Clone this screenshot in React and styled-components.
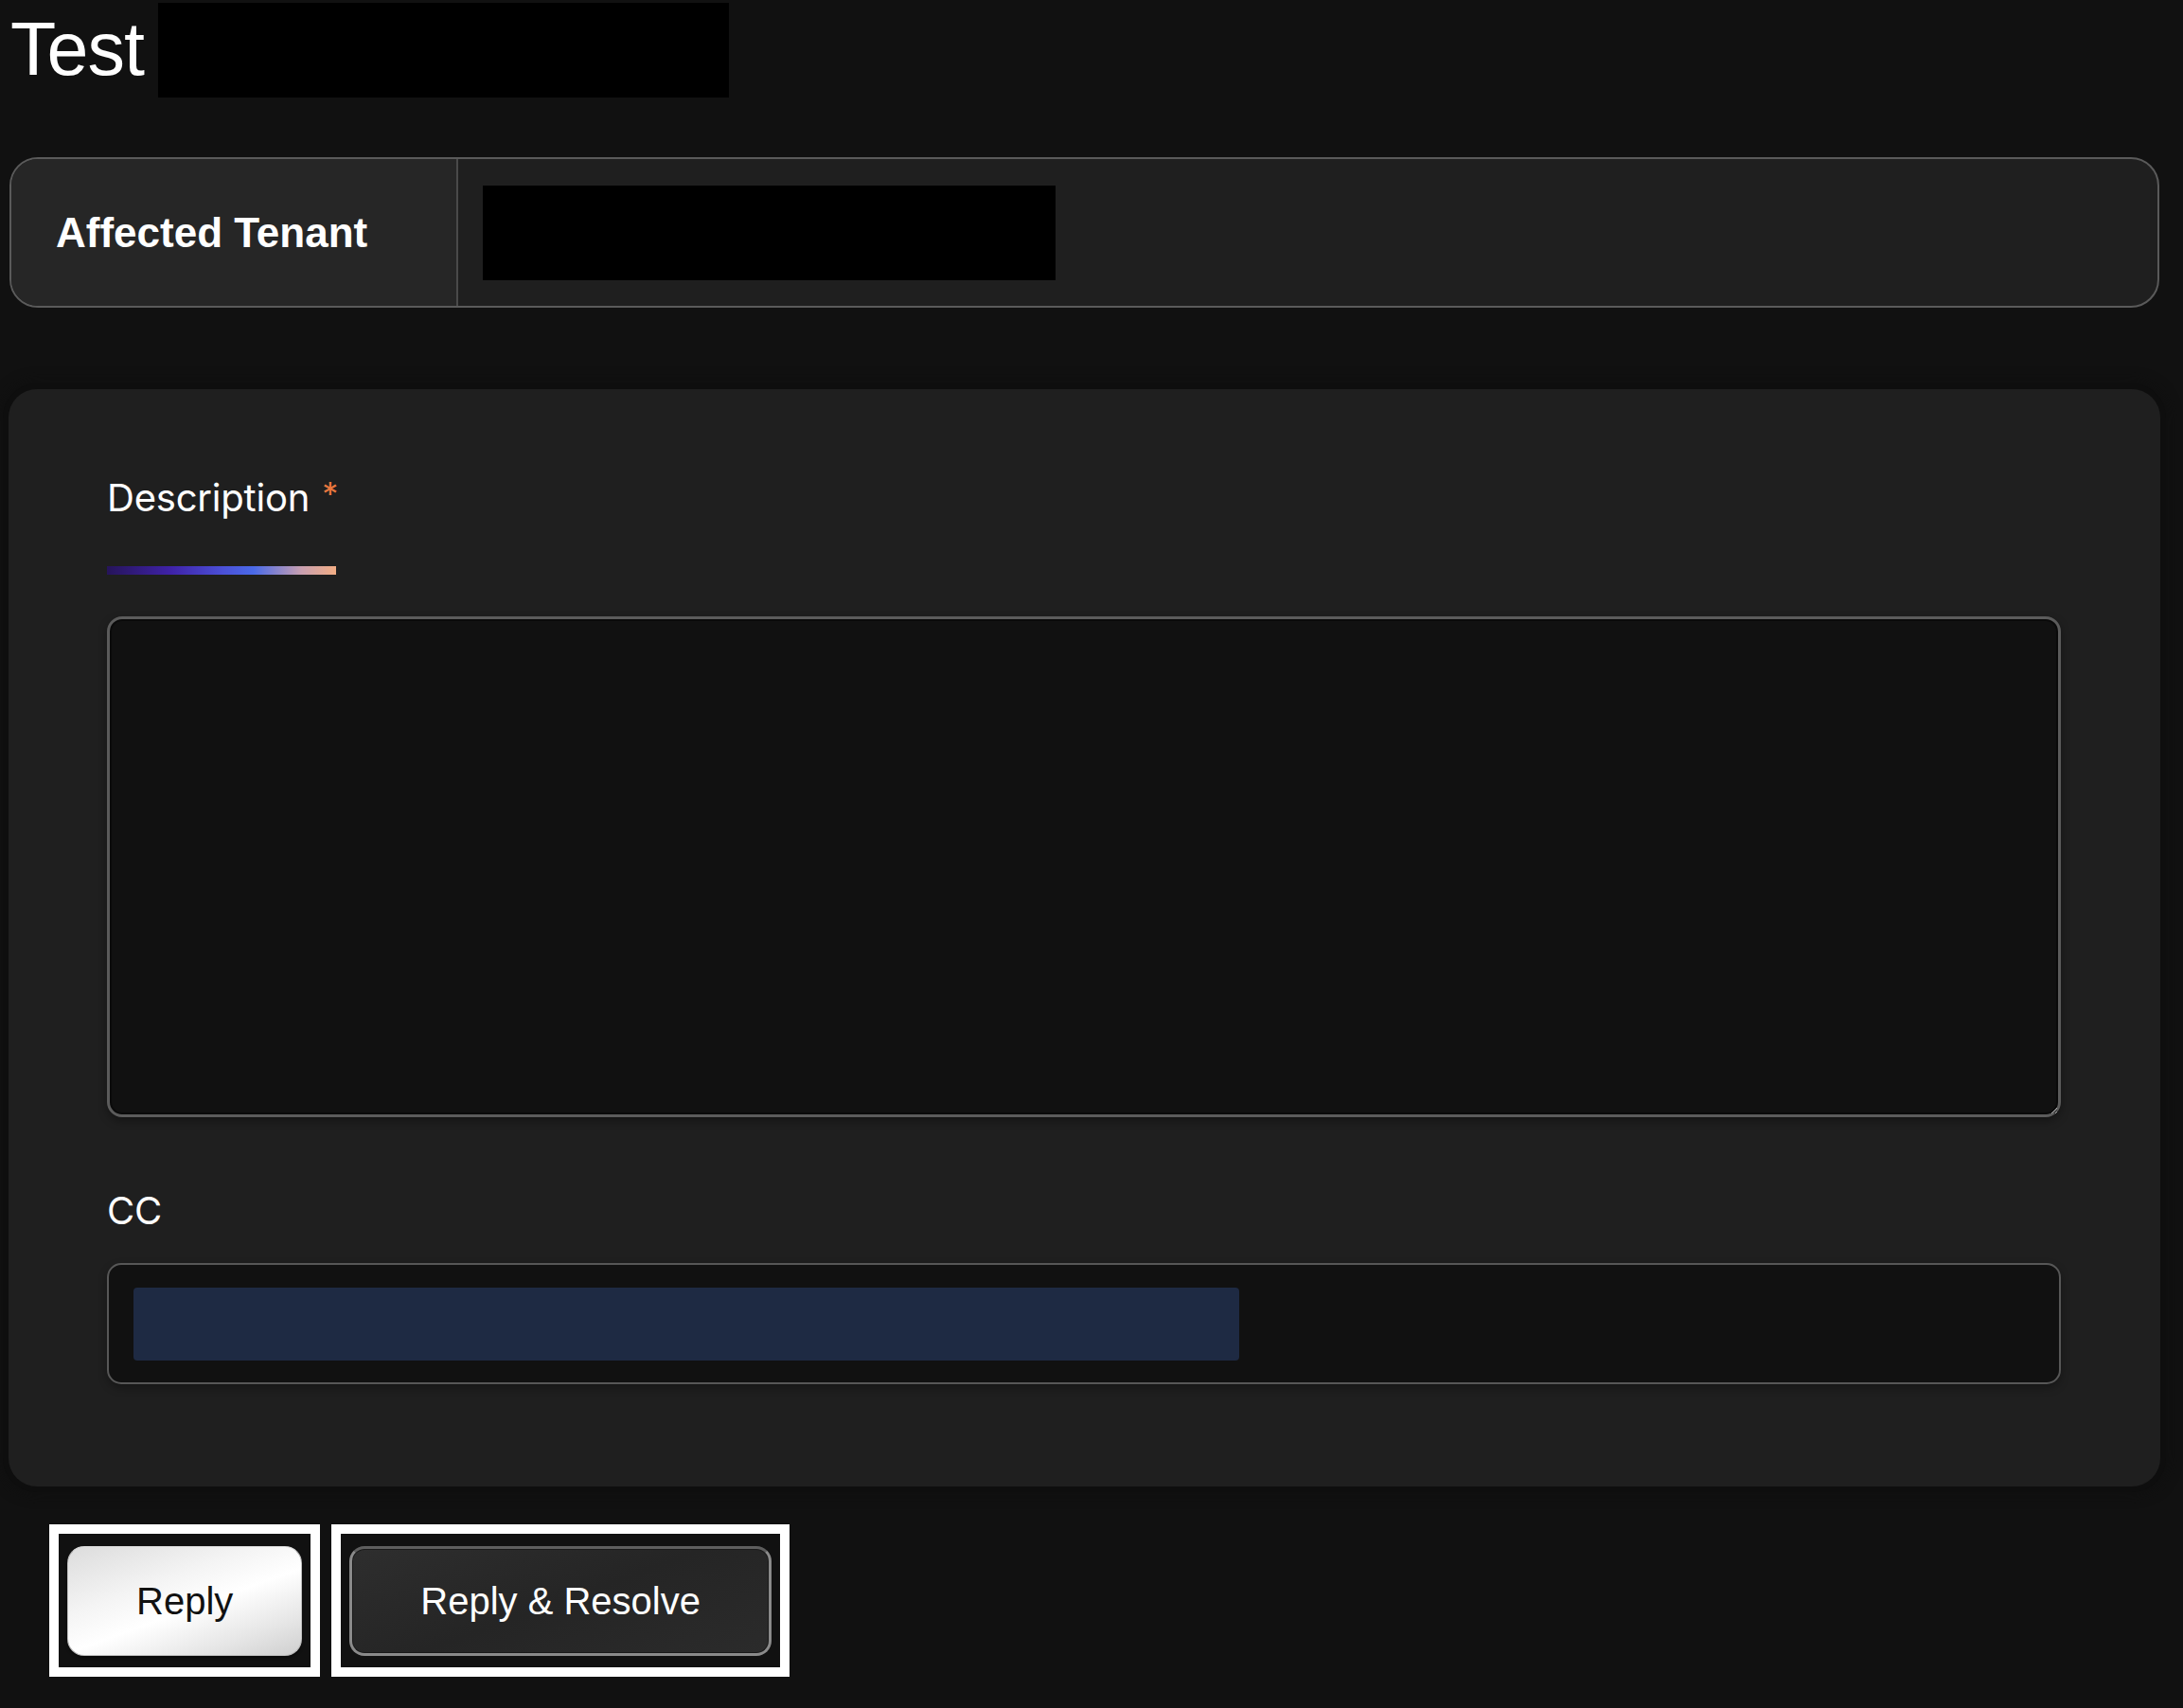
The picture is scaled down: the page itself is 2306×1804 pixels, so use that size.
import React from "react";
import styled, { createGlobalStyle } from "styled-components";

const GlobalStyle = createGlobalStyle`
  html, body {
    margin: 0;
    padding: 0;
    background: #111111;
  }
  body {
    font-family: "Liberation Sans", Arial, sans-serif;
    color: #ffffff;
  }
`;

const Page = styled.div`
  width: 2273px;
  margin-left: 9px;
  padding-top: 3px;
  padding-bottom: 30px;
`;

const Header = styled.div`
  display: flex;
  align-items: center;
  height: 100px;
`;

const Title = styled.h1`
  margin: 0 15px 0 2px;
  font-family: "Liberation Sans", Arial, sans-serif;
  font-weight: 400;
  font-size: 79px;
  letter-spacing: -1px;
  line-height: 1;
  color: #ffffff;
  padding-bottom: 4px;
`;

const Redacted = styled.div`
  width: ${(p) => p.w}px;
  height: ${(p) => p.h}px;
  background: #000000;
`;

const TenantCard = styled.div`
  margin-top: 63px;
  margin-left: 1px;
  width: 2271px;
  height: 159px;
  box-sizing: border-box;
  display: grid;
  grid-template-columns: 472px 1fr;
  border: 2px solid #5a5a5a;
  border-radius: 30px;
  overflow: hidden;
  background: #1f1f1f;
`;

const TenantLabel = styled.div`
  display: flex;
  align-items: center;
  padding-left: 47px;
  background: #262626;
  border-right: 2px solid #4a4a4a;
  font-weight: 700;
  font-size: 44px;
  color: #ffffff;
`;

const TenantValue = styled.div`
  display: flex;
  align-items: center;
  padding-left: 26px;
`;

const Panel = styled.section`
  margin-top: 86px;
  background: #1f1f1f;
  border-radius: 30px;
  padding: 87px 104px 108px 104px;
  box-shadow: 0 0 0 6px #0e0e0e, 0 0 14px 8px #0f0f0f;
`;

const FieldLabel = styled.label`
  display: block;
  font-family: Inter, "Noto Sans", sans-serif;
  font-size: 40px;
  font-weight: 400;
  line-height: 47px;
  color: #ffffff;
  letter-spacing: -0.2px;
`;

const Required = styled.span`
  color: #e8773e;
  font-size: 34px;
  margin-left: 13px;
  vertical-align: 6px;
`;

const GradientBar = styled.div`
  margin-top: 49px;
  width: 242px;
  height: 9px;
  background: linear-gradient(
    90deg,
    #26145a 0%,
    #3f22a8 28%,
    #4b4fd6 50%,
    #4a6ae8 64%,
    #c9a0b0 85%,
    #f2ad84 100%
  );
`;

const TextArea = styled.textarea`
  display: block;
  margin-top: 44px;
  width: 2064px;
  height: 529px;
  box-sizing: border-box;
  background: #111111;
  border: 3px solid #5b5b5b;
  border-radius: 16px;
  box-shadow: inset 0 0 0 2px #0a0a0a, 0 4px 10px rgba(0, 0, 0, 0.35);
  outline: none;
  resize: vertical;
  color: #ffffff;
  font-family: Inter, sans-serif;
  font-size: 30px;
`;

const CcLabel = styled(FieldLabel)`
  margin-top: 75px;
`;

const CcInput = styled.div`
  margin-top: 32px;
  width: 2064px;
  height: 128px;
  box-sizing: border-box;
  display: flex;
  align-items: center;
  padding: 0 26px;
  background: #111111;
  border: 2px solid #575757;
  border-radius: 15px;
  box-shadow: 0 4px 10px rgba(0, 0, 0, 0.3);
`;

const Chip = styled.div`
  width: 1168px;
  height: 77px;
  border-radius: 4px;
  background: #1e2a43;
`;

const Actions = styled.div`
  display: flex;
  gap: 12px;
  margin-top: 40px;
  margin-left: 43px;
`;

const Frame = styled.div`
  border: 10px solid #ffffff;
  background: #111111;
  padding: 13px 9px 12px 9px;
  display: flex;
`;

const Button = styled.button`
  height: 116px;
  padding: 0 ${(p) => (p.primary ? 72 : 72)}px;
  border-radius: ${(p) => (p.primary ? 18 : 16)}px;
  font-family: "Liberation Sans", Arial, sans-serif;
  font-size: 40px;
  cursor: pointer;
  color: ${(p) => (p.primary ? "#111111" : "#ffffff")};
  border: ${(p) => (p.primary ? "1px solid #bdbdbd" : "3px solid #8a8a8a")};
  border-top-color: ${(p) => (p.primary ? "#d8d8d8" : "#5e5e5e")};
  background: ${(p) =>
    p.primary
      ? "linear-gradient(160deg, #dcdcdc 0%, #f4f4f4 35%, #ffffff 55%, #e6e6e6 80%, #cfcfcf 100%)"
      : "linear-gradient(160deg, #2e2e2e 0%, #252525 50%, #2b2b2b 100%)"};
  box-shadow: ${(p) =>
    p.primary ? "0 2px 3px rgba(0,0,0,0.5)" : "inset 0 0 0 1px #1a1a1a"};
`;

export default function App() {
  return (
    <>
      <GlobalStyle />
      <Page>
        <Header>
          <Title>Test</Title>
          <Redacted w={603} h={100} />
        </Header>

        <TenantCard>
          <TenantLabel>Affected Tenant</TenantLabel>
          <TenantValue>
            <Redacted w={605} h={100} />
          </TenantValue>
        </TenantCard>

        <Panel>
          <FieldLabel>
            Description<Required>*</Required>
          </FieldLabel>
          <GradientBar />
          <TextArea />

          <CcLabel>CC</CcLabel>
          <CcInput>
            <Chip />
          </CcInput>
        </Panel>

        <Actions>
          <Frame>
            <Button primary>Reply</Button>
          </Frame>
          <Frame>
            <Button>Reply &amp; Resolve</Button>
          </Frame>
        </Actions>
      </Page>
    </>
  );
}
